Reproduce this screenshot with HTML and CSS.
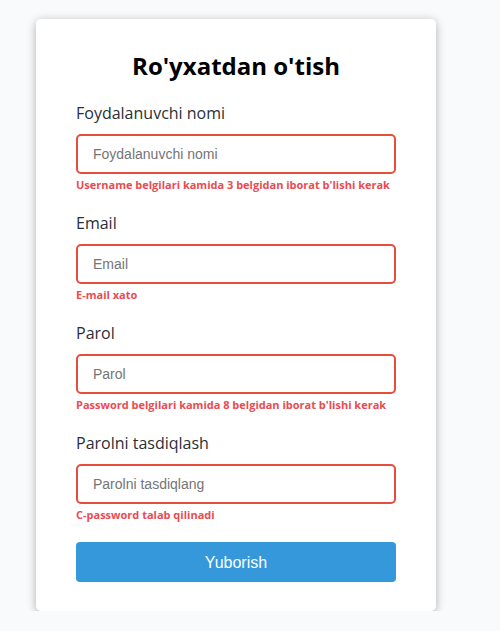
FILE: index.html
```html
<!DOCTYPE html>
<html lang="uz">
<head>
<meta charset="utf-8">
<title>Ro'yxatdan o'tish</title>
<link rel="stylesheet" href="styles.css">
</head>
<body>
<div class="card">
  <h2 class="title">Ro'yxatdan o'tish</h2>
  <form class="form">
    <div class="field">
      <label class="label">Foydalanuvchi nomi</label>
      <input class="input" type="text" placeholder="Foydalanuvchi nomi">
      <small class="error">Username belgilari kamida 3 belgidan iborat b'lishi kerak</small>
    </div>
    <div class="field">
      <label class="label">Email</label>
      <input class="input" type="text" placeholder="Email">
      <small class="error">E-mail xato</small>
    </div>
    <div class="field">
      <label class="label">Parol</label>
      <input class="input" type="password" placeholder="Parol">
      <small class="error">Password belgilari kamida 8 belgidan iborat b'lishi kerak</small>
    </div>
    <div class="field">
      <label class="label">Parolni tasdiqlash</label>
      <input class="input" type="password" placeholder="Parolni tasdiqlang">
      <small class="error">C-password talab qilinadi</small>
    </div>
    <button class="btn" type="button">Yuborish</button>
  </form>
</div>
</body>
</html>
```
FILE: styles.css
```css
* { box-sizing: border-box; }
html, body { margin: 0; padding: 0; }
body {
  background: #f9fafb;
  font-family: "Open Sans", sans-serif;
  padding-top: 19px;
  padding-left: 36px;
}
.card {
  width: 400px;
  background: #fff;
  border-radius: 5px;
  box-shadow: 0 2px 10px rgba(0,0,0,0.3);
  padding: 30px 40px 29px;
}
.title {
  margin: 0 0 19px;
  font-size: 24px;
  line-height: 33px;
  font-weight: 700;
  text-align: center;
  color: #000;
}
.form { display: flex; flex-direction: column; }
.field {
  display: flex;
  flex-direction: column;
  margin-bottom: 18px;
}
.label {
  font-size: 16px;
  line-height: 24px;
  color: #2a2f36;
  margin-bottom: 9px;
}
.input {
  height: 40px;
  width: 100%;
  border: 2px solid #e74c3c;
  border-radius: 5px;
  padding: 10px 15px;
  font-family: "Liberation Sans", Arial, sans-serif;
  font-size: 14px;
  outline: none;
}
.input::placeholder { color: #757575; }
.error {
  margin-top: 3px;
  font-size: 11px;
  line-height: 16px;
  font-weight: 700;
  color: #ea4b52;
}
.btn {
  height: 40px;
  width: 100%;
  border: none;
  border-radius: 4px;
  background: #3498db;
  color: #fff;
  font-family: "Liberation Sans", Arial, sans-serif;
  font-size: 16px;
  padding-top: 2px;
  cursor: pointer;
  margin-top: 1px;
}
```
